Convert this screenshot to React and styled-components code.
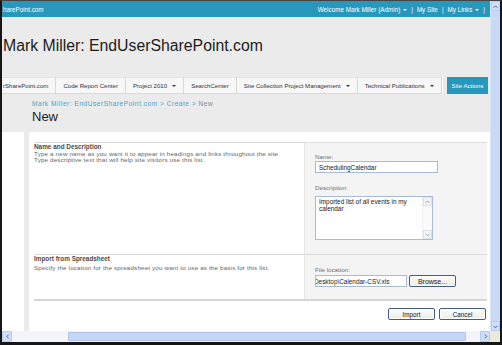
import React from "react";
import styled, { createGlobalStyle } from "styled-components";

const Global = createGlobalStyle`
  html, body { margin: 0; padding: 0; background: #fff; }
  body { font-family: "Liberation Sans", Arial, sans-serif; }
  * { box-sizing: border-box; }
`;

const TEAL = "#2798bb";

const Frame = styled.div`
  width: 502px;
  height: 345px;
  border: 2px solid #161616;
  border-top: 1px solid #444;
  border-bottom-width: 3px;
  display: flex;
  flex-direction: column;
  overflow: hidden;
  background: #ebebeb;
`;
const Upper = styled.div`
  flex: 1;
  display: flex;
  min-height: 0;
`;
const Page = styled.div`
  flex: 1;
  min-width: 0;
  display: flex;
  flex-direction: column;
  overflow: hidden;
`;

/* top bar */
const TopBar = styled.div`
  height: 16px;
  background: ${TEAL};
  color: #fff;
  font-size: 6.3px;
  display: flex;
  align-items: center;
  justify-content: space-between;
  padding: 0 5px 0 1px;
  white-space: nowrap;
`;
const TopLinks = styled.div`
  display: flex;
  align-items: center;
  gap: 4px;
`;
const Caret = styled.span`
  display: inline-block;
  width: 0;
  height: 0;
  border-left: 2px solid transparent;
  border-right: 2px solid transparent;
  border-top: 2px solid ${(p) => p.$color || "#fff"};
  margin-left: ${(p) => p.$gap || 3}px;
  vertical-align: middle;
`;

/* title */
const TitleArea = styled.div`
  height: 60px;
  padding: 19px 0 0 1px;
`;
const SiteTitle = styled.div`
  font-size: 15.8px;
  line-height: 20px;
  color: #1c1c1c;
  white-space: nowrap;
`;

/* nav */
const Nav = styled.div`
  height: 17px;
  display: flex;
  align-items: stretch;
  font-size: 6.1px;
  color: #333;
  white-space: nowrap;
`;
const Tab = styled.div`
  display: flex;
  align-items: center;
  padding: 0 ${(p) => (p.$first ? "7px 0 1px" : "7px")};
  background: #f7f7f7;
  border-top: 1px solid #e2e2e2;
  border-bottom: 1px solid #d9d9d9;
  border-right: 1px solid #d8d8d8;
`;
const NavGap = styled.div`
  width: 5px;
  border-left: 1px solid #fff;
`;
const SiteActions = styled.div`
  display: flex;
  align-items: center;
  padding: 0 5px;
  background: ${TEAL};
  color: #fff;
  font-size: 6.1px;
`;

/* heading */
const Crumbs = styled.div`
  margin: 6px 0 0 30px;
  font-size: 6.5px;
  line-height: 8px;
  letter-spacing: 0.55px;
  color: #4aa4c6;
  white-space: nowrap;
`;
const CrumbCur = styled.span`
  color: #888;
`;
const PageTitle = styled.div`
  margin: 2px 0 0 30px;
  font-size: 13px;
  line-height: 14px;
  color: #1c1c1c;
`;

/* body */
const Body = styled.div`
  flex: 1;
  margin-top: 8px;
  display: flex;
  min-height: 0;
`;
const LeftNav = styled.div`
  width: 22px;
  background: #fff;
`;
const Strip = styled.div`
  width: 5px;
  background: #ebebeb;
`;
const Content = styled.div`
  flex: 1;
  background: #fff;
  padding: 10px 3px 0 5px;
`;
const Section = styled.div`
  display: grid;
  grid-template-columns: 1fr 183px;
  height: ${(p) => p.$h}px;
  border-top: 1px solid #dcdcdc;
  ${(p) => (p.$last ? "border-bottom: 2px solid #d6d6d6;" : "")}
`;
const SectionText = styled.div`
  color: #666;
  white-space: nowrap;
`;
const SectionHead = styled.div`
  font-weight: bold;
  color: #4a4a4a;
  font-size: 6.4px;
  height: 7.5px;
  line-height: 7.5px;
`;
const SectionLine = styled.div`
  font-size: 6.25px;
  letter-spacing: 0.16px;
  height: 6px;
  line-height: 6px;
  margin-top: ${(p) => p.$mt || 0}px;
`;
const FieldCol = styled.div`
  background: #f4f4f4;
  border-left: 1px solid #e6e6e6;
  padding: ${(p) => p.$pt || 9}px 0 0 10px;
`;
const Label = styled.div`
  font-size: 6.2px;
  line-height: 7px;
  color: #6f6f6f;
  margin-bottom: ${(p) => p.$mb || 1}px;
`;
const TextBox = styled.div`
  width: ${(p) => p.$w}px;
  height: 12px;
  border: 1px solid #a7bcd3;
  background: #fff;
  font-size: 6.4px;
  color: #222;
  display: flex;
  align-items: center;
  padding-left: ${(p) => p.$pl ?? 3}px;
  overflow: hidden;
  white-space: nowrap;
  margin-bottom: ${(p) => p.$mb || 0}px;
`;
const Shifted = styled.span`
  margin-left: -2px;
`;
const Area = styled.div`
  width: 118px;
  height: 44px;
  border: 1px solid #a7bcd3;
  background: #fff;
  display: flex;
`;
const AreaText = styled.div`
  flex: 1;
  padding: 2px 3px;
  font-size: 6.4px;
  line-height: 6.6px;
  color: #222;
`;
const AreaScroll = styled.div`
  width: 10px;
  display: flex;
  flex-direction: column;
  justify-content: space-between;
  background: #fafafa;
  border-left: 1px solid #f0f0f0;
`;
const AreaBtn = styled.div`
  height: 9px;
  display: flex;
  align-items: center;
  justify-content: center;
  background: #f2f4f8;
  border: 1px solid #dde3ee;
`;
const FileRow = styled.div`
  display: flex;
  gap: 2px;
`;
const Button = styled.div`
  width: ${(p) => p.$w}px;
  height: 12px;
  border: 1px solid #3f5e80;
  border-radius: 2px;
  background: linear-gradient(#fdfdfb, #ecebe6);
  font-size: ${(p) => p.$fs || 6.3}px;
  color: #222;
  display: flex;
  align-items: center;
  justify-content: center;
  box-shadow: inset 0 0 0 1px #fff;
`;
const Actions = styled.div`
  margin-top: 7px;
  display: flex;
  justify-content: flex-end;
  gap: 4px;
  padding-right: 1px;
`;

/* scrollbars */
const VScroll = styled.div`
  width: 10px;
  background: #c8daf8;
  border-left: 1px solid #d9e5fa;
  display: flex;
  flex-direction: column;
  justify-content: space-between;
`;
const ScrollBtn = styled.div`
  width: ${(p) => (p.$h ? "10px" : "100%")};
  height: ${(p) => (p.$h ? "100%" : "10px")};
  background: #cfdefa;
  border: 1px solid #b6cbef;
  border-radius: 1px;
  display: flex;
  align-items: center;
  justify-content: center;
  flex-shrink: 0;
`;
const HScroll = styled.div`
  height: 11px;
  display: flex;
  background: #f3f5fb;
`;
const HTrack = styled.div`
  flex: 1;
  display: flex;
  align-items: stretch;
  padding: 1px 14px 1px 56px;
`;
const HThumb = styled.div`
  flex: 1;
  background: #c4d7f7;
  border: 1px solid #b2c7ee;
  border-radius: 1px;
`;
const Corner = styled.div`
  width: 10px;
  background: #ece9d8;
`;

const Arrow = ({ dir, color = "#4d6185", size = 5 }) => {
  const paths = {
    up: "M1 6 L4 3 L7 6",
    down: "M1 3 L4 6 L7 3",
    left: "M6 1 L3 4 L6 7",
    right: "M3 1 L6 4 L3 7",
  };
  return (
    <svg width={size} height={size} viewBox="0 0 8 8">
      <path d={paths[dir]} fill="none" stroke={color} strokeWidth="1.6" />
    </svg>
  );
};

export default function App() {
  return (
    <>
      <Global />
      <Frame>
        <Upper>
          <Page>
            <TopBar>
              <span>harePoint.com</span>
              <TopLinks>
                <span>
                  Welcome Mark Miller (Admin)
                  <Caret />
                </span>
                <span>|</span>
                <span>My Site</span>
                <span>|</span>
                <span>
                  My Links
                  <Caret />
                </span>
                <span>|</span>
              </TopLinks>
            </TopBar>
            <TitleArea>
              <SiteTitle>Mark Miller: EndUserSharePoint.com</SiteTitle>
            </TitleArea>
            <Nav>
              <Tab $first>rSharePoint.com</Tab>
              <Tab>Code Report Center</Tab>
              <Tab>
                Project 2010
                <Caret $color="#333" $gap={5} />
              </Tab>
              <Tab>SearchCenter</Tab>
              <Tab>
                Site Collection Project Management
                <Caret $color="#333" $gap={5} />
              </Tab>
              <Tab>
                Technical Publications
                <Caret $color="#333" $gap={5} />
              </Tab>
              <NavGap />
              <SiteActions>Site Actions</SiteActions>
            </Nav>
            <Crumbs>
              Mark Miller: EndUserSharePoint.com &gt; Create &gt; <CrumbCur>New</CrumbCur>
            </Crumbs>
            <PageTitle>New</PageTitle>
            <Body>
              <LeftNav />
              <Strip />
              <Content>
                <Section $h={112}>
                  <SectionText>
                    <SectionHead>Name and Description</SectionHead>
                    <SectionLine>
                      Type a new name as you want it to appear in headings and links throughout the site.
                    </SectionLine>
                    <SectionLine>
                      Type descriptive text that will help site visitors use this list.
                    </SectionLine>
                  </SectionText>
                  <FieldCol $pt={10}>
                    <Label>Name:</Label>
                    <TextBox $w={123} $mb={11}>SchedulingCalendar</TextBox>
                    <Label $mb={5}>Description:</Label>
                    <Area>
                      <AreaText>
                        Imported list of all events in my calendar
                      </AreaText>
                      <AreaScroll>
                        <AreaBtn>
                          <Arrow dir="up" color="#9aa6b8" size={5} />
                        </AreaBtn>
                        <AreaBtn>
                          <Arrow dir="down" color="#9aa6b8" size={5} />
                        </AreaBtn>
                      </AreaScroll>
                    </Area>
                  </FieldCol>
                </Section>
                <Section $h={47} $last>
                  <SectionText>
                    <SectionHead>Import from Spreadsheet</SectionHead>
                    <SectionLine $mt={2}>
                      Specify the location for the spreadsheet you want to use as the basis for this list.
                    </SectionLine>
                  </SectionText>
                  <FieldCol $pt={11}>
                    <Label $mb={2}>File location:</Label>
                    <FileRow>
                      <TextBox $w={92} $pl={0}>
                        <Shifted>Desktop\Calendar-CSV.xls</Shifted>
                      </TextBox>
                      <Button $w={47} $fs={7}>Browse...</Button>
                    </FileRow>
                  </FieldCol>
                </Section>
                <Actions>
                  <Button $w={47}>Import</Button>
                  <Button $w={47}>Cancel</Button>
                </Actions>
              </Content>
            </Body>
          </Page>
          <VScroll>
            <ScrollBtn>
              <Arrow dir="up" />
            </ScrollBtn>
            <ScrollBtn>
              <Arrow dir="down" />
            </ScrollBtn>
          </VScroll>
        </Upper>
        <HScroll>
          <ScrollBtn $h>
            <Arrow dir="left" />
          </ScrollBtn>
          <HTrack>
            <HThumb />
          </HTrack>
          <ScrollBtn $h>
            <Arrow dir="right" />
          </ScrollBtn>
          <Corner />
        </HScroll>
      </Frame>
    </>
  );
}
